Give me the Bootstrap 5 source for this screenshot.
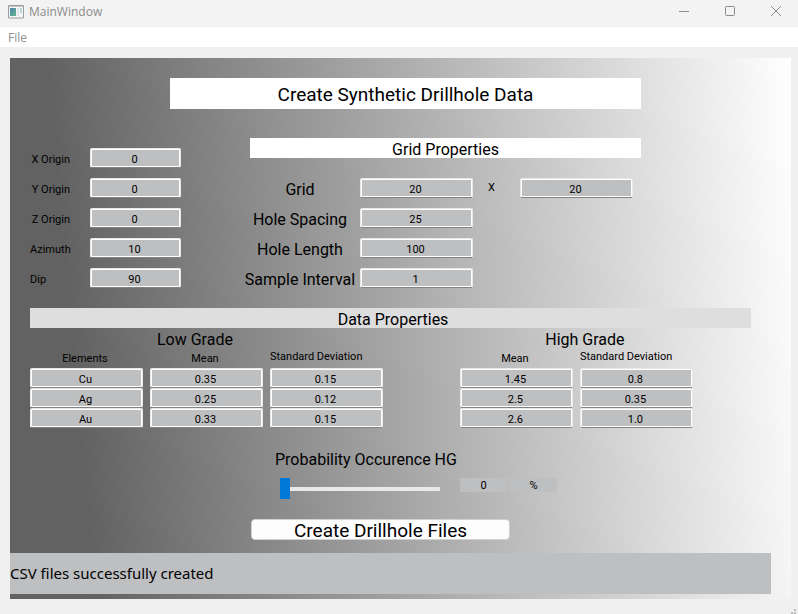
<!DOCTYPE html>
<html lang="en">
<head>
<meta charset="utf-8">
<meta name="viewport" content="width=device-width, initial-scale=1">
<title>MainWindow</title>
<link href="https://cdn.jsdelivr.net/npm/bootstrap@5.3.0/dist/css/bootstrap.min.css" rel="stylesheet">
<style>
:root { --field: #bebfc1; }
body { background: #f0f0f0; color: #000; font-family: Roboto, "Noto Sans", sans-serif; font-size: 11px; line-height: 20px; min-height: 100vh; }
.titlebar, .menubar { font-family: "Open Sans", "Noto Sans", sans-serif; font-size: 12px; }
.titlebar { background: #f3f3f3; color: #8b8b8b; height: 27px; padding: 0 15px 3px 8px; }
.titlebar button { width: 14px; height: 14px; line-height: 0; color: #8b8b8b; }
.window-name { gap: 5px; }
.caption-buttons { gap: 32px; }
.menubar { height: 20px; line-height: 21px; padding-left: 8px; }
.menubar a { color: #8f8f8f; }
.panel { margin: 11px 7px 0 10px; padding: 20px 0 5px; background: linear-gradient(85deg, #626262 10%, #fff 100%); }
.title-row { display: grid; grid-template-columns: 160fr 471fr 150fr; }
.title-row h1 { grid-column: 2; font-size: 19px; line-height: 29px; padding-top: 2px; }
.heading { font-size: 16px; line-height: 20px; }
.heading-bar { line-height: 16px; padding-top: 4px; }
.props { display: grid; grid-template-columns: 20fr 151fr 59fr 401fr 150fr; margin-top: 29px; }
.origin { grid-column: 2; margin-top: 10px; display: grid; grid-template-columns: minmax(0, 60fr) minmax(0, 91fr); row-gap: 10px; }
.origin label, .grid-form label { line-height: 24px; height: 20px; white-space: nowrap; }
.origin .axis { text-align: right; padding-right: 20px; }
.grid-side { grid-column: 4; display: grid; grid-template-columns: 10fr 391fr; }
.grid-side h2 { grid-column: 2; }
.grid-form { grid-column: 1 / 3; margin-top: 20px; display: grid; grid-template-columns: minmax(0, 120fr) minmax(0, 113fr) minmax(0, 47fr) minmax(0, 113fr) minmax(0, 8fr); row-gap: 10px; }
.grid-form .heading { grid-column: 1; }
.grid-form .times { line-height: 20px; padding-right: 10px; }
.field { display: block; width: 100%; height: 20px; padding: 2px 2px 0 0; text-align: center; line-height: 16px; background: var(--field); color: #000; border: 1px solid #e8e8e8; border-bottom-color: #828282; border-radius: 2px; box-shadow: inset 0 0 0 1px #fff; }
.data { display: grid; grid-template-columns: 20fr 721fr 40fr; margin-top: 20px; }
.data > * { grid-column: 2; }
.data h2 { background: #dedede; padding-left: 5px; }
.data table { width: 100%; table-layout: fixed; border-collapse: collapse; }
.data th { font-weight: 400; line-height: 18px; padding: 2px 10px 0 0; text-align: center; vertical-align: bottom; }
.data td { padding: 0 7px 0 0; }
.data th.deviation { text-align: left; padding-top: 0; vertical-align: top; white-space: nowrap; }
.data th.heading { line-height: 16px; padding-top: 4px; }
.data th.low { padding-right: 30px; }
.data th.high { padding-left: 10px; padding-right: 0; }
.c-field { width: 16.64%; } .c-gap { width: 9.71%; }
.chance { display: grid; grid-template-columns: minmax(0, 265fr) minmax(0, 5fr) minmax(0, 160fr) minmax(0, 20fr) minmax(0, 47fr) minmax(0, 3fr) minmax(0, 47fr) minmax(0, 234fr); margin-top: 21px; }
.chance label { grid-column: 2 / 9; line-height: 18px; padding-top: 2px; }
.chance input { grid-column: 3; }
.chance output { line-height: 15px; height: 14px; background: var(--field); text-align: center; margin-top: 9px; }
.chance .pct { grid-column: 5; } .chance .unit { grid-column: 7; }
.slider { appearance: none; width: 100%; height: 21px; margin: 9px 0 0; background: transparent; }
.slider::-webkit-slider-runnable-track { height: 4px; background: #e7eaea; border: 0; }
.slider::-webkit-slider-thumb { appearance: none; width: 10px; height: 21px; margin-top: -9px; background: #0078d7; }
.action { display: grid; grid-template-columns: 241fr 259fr 281fr; margin-top: 20px; }
.action button { grid-column: 2; font-size: 19px; line-height: 16px; background: #fdfdfd; border: 1px solid #d0d0d0; border-radius: 4px; padding: 3px 0 0; color: #000; }
.status { display: grid; grid-template-columns: 761fr 20fr; margin-top: 13px; font-family: "Noto Sans", sans-serif; font-size: 15px; line-height: 41px; }
.status output { background: var(--field); }
.grip { margin-top: auto; padding-right: 2px; line-height: 0; }
</style>
</head>
<body class="d-flex flex-column">
<header class="titlebar d-flex align-items-center justify-content-between">
  <div class="window-name d-flex align-items-center">
    <svg width="16" height="14" viewBox="0 0 16 14" aria-hidden="true">
      <defs><linearGradient id="g" x1="0" y1="0" x2="1" y2="1"><stop offset="0" stop-color="#4f83b0"/><stop offset="1" stop-color="#63b78a"/></linearGradient></defs>
      <path d="M.5 .5h15v12.500h-15z" fill="#f6f6f6" stroke="#9a9ea3"/><path d="M1 1.500h14" stroke="#c2c5c9"/>
      <path d="M2 3h6v8H2z" fill="url(#g)"/><path d="M9 3h2v8H9z" fill="#e2e4e7"/><path d="M12 3h2v5h-2z" fill="#b9d8d5"/>
    </svg>
    <span>MainWindow</span>
  </div>
  <div class="caption-buttons d-flex">
    <button class="btn p-0 border-0" type="button" aria-label="Minimize"><svg width="12" height="12" viewBox="0 0 12 12" fill="none" stroke="currentColor"><path d="M1 5.500h10"/></svg></button>
    <button class="btn p-0 border-0" type="button" aria-label="Maximize"><svg width="12" height="12" viewBox="0 0 12 12" fill="none" stroke="currentColor"><rect x="1.500" y=".5" width="9" height="9" rx="1"/></svg></button>
    <button class="btn p-0 border-0" type="button" aria-label="Close"><svg width="12" height="12" viewBox="0 0 12 12" fill="none" stroke="currentColor"><path d="M1 0l10 10M11 0L1 10"/></svg></button>
  </div>
</header>
<nav class="menubar bg-white"><a class="text-decoration-none" href="#">File</a></nav>

<main class="panel">
  <div class="title-row"><h1 class="bg-white text-center mb-0 fw-normal">Create Synthetic Drillhole Data</h1></div>

  <div class="props">
    <div class="origin align-content-start">
      <label class="axis" for="xo">X Origin</label><input class="field" id="xo" value="0">
      <label class="axis" for="yo">Y Origin</label><input class="field" id="yo" value="0">
      <label class="axis" for="zo">Z Origin</label><input class="field" id="zo" value="0">
      <label for="az">Azimuth</label><input class="field" id="az" value="10">
      <label for="dip">Dip</label><input class="field" id="dip" value="90">
    </div>
    <section class="grid-side">
      <h2 class="heading heading-bar bg-white text-center mb-0 fw-normal">Grid Properties</h2>
      <div class="grid-form text-center">
        <label class="heading" for="gx">Grid</label><input class="field" id="gx" value="20">
        <label class="times" for="gy">X</label><input class="field" id="gy" value="20">
        <label class="heading" for="sp">Hole Spacing</label><input class="field" id="sp" value="25">
        <label class="heading" for="len">Hole Length</label><input class="field" id="len" value="100">
        <label class="heading" for="si">Sample Interval</label><input class="field" id="si" value="1">
      </div>
    </section>
  </div>

  <section class="data">
    <h2 class="heading heading-bar text-center mb-0 fw-normal">Data Properties</h2>
    <table>
      <colgroup><col class="c-field"><col class="c-field"><col class="c-field"><col class="c-gap"><col class="c-field"><col class="c-field"><col></colgroup>
      <thead>
        <tr><th class="heading low" colspan="3">Low Grade</th><th></th><th class="heading high" colspan="2">High Grade</th><th></th></tr>
        <tr><th>Elements</th><th>Mean</th><th class="deviation">Standard Deviation</th><th></th><th>Mean</th><th class="deviation">Standard Deviation</th><th></th></tr>
      </thead>
      <tbody>
        <tr><td><input class="field" aria-label="Element 1" value="Cu"></td><td><input class="field" aria-label="Low grade mean 1" value="0.35"></td><td><input class="field" aria-label="Low grade deviation 1" value="0.15"></td><td></td><td><input class="field" aria-label="High grade mean 1" value="1.45"></td><td><input class="field" aria-label="High grade deviation 1" value="0.8"></td><td></td></tr>
        <tr><td><input class="field" aria-label="Element 2" value="Ag"></td><td><input class="field" aria-label="Low grade mean 2" value="0.25"></td><td><input class="field" aria-label="Low grade deviation 2" value="0.12"></td><td></td><td><input class="field" aria-label="High grade mean 2" value="2.5"></td><td><input class="field" aria-label="High grade deviation 2" value="0.35"></td><td></td></tr>
        <tr><td><input class="field" aria-label="Element 3" value="Au"></td><td><input class="field" aria-label="Low grade mean 3" value="0.33"></td><td><input class="field" aria-label="Low grade deviation 3" value="0.15"></td><td></td><td><input class="field" aria-label="High grade mean 3" value="2.6"></td><td><input class="field" aria-label="High grade deviation 3" value="1.0"></td><td></td></tr>
      </tbody>
    </table>
  </section>

  <div class="chance">
    <label class="heading" for="prob">Probability Occurence HG</label>
    <input class="slider" id="prob" type="range" min="0" max="100" value="0">
    <output class="pct" for="prob">0</output><output class="unit">%</output>
  </div>

  <div class="action"><button type="button">Create Drillhole Files</button></div>
  <div class="status"><output>CSV files successfully created</output></div>
</main>
<footer class="grip text-end"><svg width="5" height="5" viewBox="0 0 5 5" fill="#bcbcbc" aria-hidden="true"><path d="M3 0h2v2H3zM0 3h2v2H0zM3 3h2v2H3z"/></svg></footer>
<script src="https://cdn.jsdelivr.net/npm/bootstrap@5.3.0/dist/js/bootstrap.bundle.min.js"></script>
</body>
</html>
